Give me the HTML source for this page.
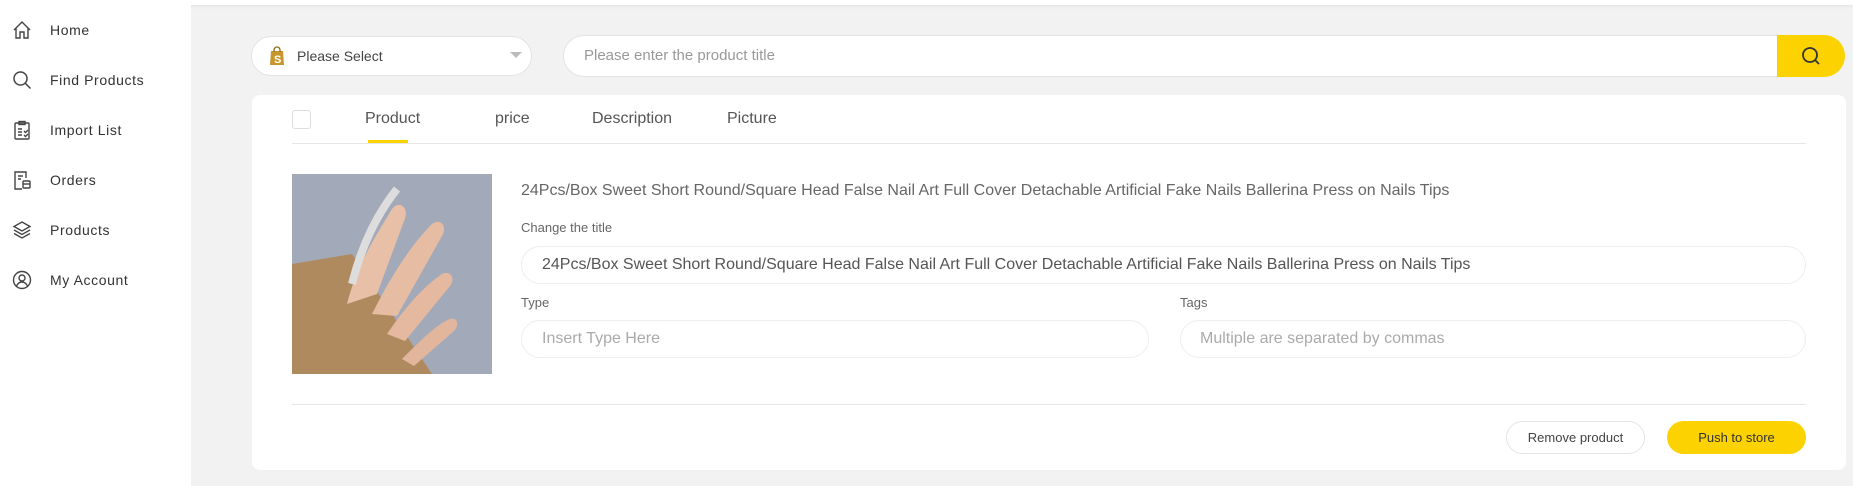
<!DOCTYPE html>
<html><head><meta charset="utf-8"><style>
*{box-sizing:border-box;margin:0;padding:0}
body{width:1853px;height:486px;background:#f2f2f2;font-family:"Liberation Sans",sans-serif;position:relative;overflow:hidden;color:#555}
.top{position:absolute;left:0;top:0;width:1853px;height:5px;background:#fff;box-shadow:0 1px 4px rgba(0,0,0,.08)}
.side{position:absolute;left:0;top:5px;width:191px;height:481px;background:#fff}
.nav{position:absolute;left:0;height:24px;display:flex;align-items:center;font-size:14px;color:#333;letter-spacing:.6px}
.nav svg{position:absolute;left:12px;width:20px;height:20px}
.nav span{position:absolute;left:50px;white-space:nowrap}
.abs{position:absolute}
.pill{position:absolute;background:#fff;border:1px solid #e4e4e4;border-radius:22px}
.t{position:absolute;white-space:nowrap}
</style></head><body>
<div class="top"></div>
<div class="side">
<div class="nav" style="top:13px"><svg viewBox="0 0 20 20" fill="none" stroke="#444" stroke-width="1.4"><path d="M2 10L10 2l8 8M4 8v10h4v-6h4v6h4V8"/></svg><span>Home</span></div>
<div class="nav" style="top:63px"><svg viewBox="0 0 20 20" fill="none" stroke="#444" stroke-width="1.5"><circle cx="8.5" cy="8.5" r="6.5"/><path d="M13.5 13.5l5 5"/></svg><span>Find Products</span></div>
<div class="nav" style="top:113px"><svg viewBox="0 0 20 20" fill="none" stroke="#444" stroke-width="1.4"><rect x="3" y="3" width="14" height="16" rx="1"/><rect x="7" y="1.5" width="6" height="3"/><path d="M6 9h4M6 12h4M6 15h4M12 11l1.5 1.5L16 10M12 15l1.5 1.5L16 14"/></svg><span>Import List</span></div>
<div class="nav" style="top:163px"><svg viewBox="0 0 20 20" fill="none" stroke="#444" stroke-width="1.4"><path d="M14 8V2H3v17h7"/><path d="M6 6h5M6 9h3"/><rect x="11" y="11" width="7" height="7" rx="1"/><path d="M11 14h7"/></svg><span>Orders</span></div>
<div class="nav" style="top:213px"><svg viewBox="0 0 20 20" fill="none" stroke="#444" stroke-width="1.4"><path d="M10 2l8 4.5-8 4.5-8-4.5z"/><path d="M2 10l8 4.5 8-4.5M2 13.5l8 4.5 8-4.5"/></svg><span>Products</span></div>
<div class="nav" style="top:263px"><svg viewBox="0 0 20 20" fill="none" stroke="#444" stroke-width="1.4"><circle cx="10" cy="10" r="8.5"/><circle cx="10" cy="8" r="3"/><path d="M4.5 16c1.5-3 3.5-4 5.5-4s4 1 5.5 4"/></svg><span>My Account</span></div>
</div>

<div class="pill" style="left:251px;top:36px;width:281px;height:40px"></div>
<svg class="abs" style="left:269px;top:46px" width="16" height="20" viewBox="0 0 16 20"><path d="M2 5h12l1 14H1z" fill="#c8962a"/><path d="M5 6V4a3 3 0 016 0v2" fill="none" stroke="#8a6a1a" stroke-width="1.3"/><text x="5" y="17" font-size="11" font-weight="bold" fill="#fff" font-family="Liberation Sans">S</text></svg>
<div class="t" style="left:297px;top:48px;font-size:14px;color:#444">Please Select</div>
<div class="abs" style="left:510px;top:52px;width:0;height:0;border-left:6px solid transparent;border-right:6px solid transparent;border-top:6px solid #bbb"></div>

<div class="pill" style="left:563px;top:35px;width:1240px;height:42px;border-radius:22px 0 0 22px"></div>
<div class="t" style="left:584px;top:47px;font-size:15px;color:#999">Please enter the product title</div>
<div class="abs" style="left:1777px;top:35px;width:68px;height:42px;background:#fcd200;border-radius:0 22px 22px 0"></div>
<svg class="abs" style="left:1800px;top:45px" width="22" height="22" viewBox="0 0 22 22" fill="none" stroke="#333" stroke-width="1.8"><circle cx="10" cy="10" r="7"/><path d="M15 15l4 4"/></svg>

<div class="abs" style="left:252px;top:95px;width:1594px;height:375px;background:#fff;border-radius:8px"></div>
<div class="abs" style="left:292px;top:110px;width:19px;height:19px;border:1px solid #ddd;border-radius:3px"></div>
<div class="t" style="left:365px;top:110px;font-size:16px;color:#555">Product</div>
<div class="t" style="left:495px;top:110px;font-size:16px;color:#555">price</div>
<div class="t" style="left:592px;top:110px;font-size:16px;color:#555">Description</div>
<div class="t" style="left:727px;top:110px;font-size:16px;color:#555">Picture</div>
<div class="abs" style="left:368px;top:140px;width:40px;height:3px;background:#fcd200"></div>
<div class="abs" style="left:292px;top:143px;width:1514px;height:1px;background:#e6e6e6"></div>

<svg class="abs" style="left:292px;top:174px" width="200" height="200" viewBox="0 0 200 200">
<rect width="200" height="200" fill="#9aa3b3"/>
<path d="M0 0h200v200H0z" fill="#a9b0bd" opacity=".5"/>
<path d="M0 90l60-10 80 120H0z" fill="#b08a5f"/>
<path d="M55 130c10-40 30-70 45-95 8-10 18 0 12 12L85 120z" fill="#e8c0a8"/>
<path d="M80 140c20-40 40-70 60-90 8-6 16 2 10 12l-45 80z" fill="#e6bca3"/>
<path d="M95 160c20-30 40-50 55-60 8-4 14 4 8 12l-45 55z" fill="#e4b9a0"/>
<path d="M110 185c20-20 35-35 48-40 7-2 10 6 4 12l-40 35z" fill="#e2b69d"/>
<path d="M60 110c10-40 25-70 45-95" stroke="#ddd" stroke-width="8" fill="none"/>
</svg>

<div class="t" style="left:521px;top:182px;font-size:16px;color:#666">24Pcs/Box Sweet Short Round/Square Head False Nail Art Full Cover Detachable Artificial Fake Nails Ballerina Press on Nails Tips</div>
<div class="t" style="left:521px;top:220px;font-size:13px;color:#666">Change the title</div>
<div class="pill" style="left:521px;top:246px;width:1285px;height:38px;border-color:#eee"></div>
<div class="t" style="left:542px;top:256px;font-size:16px;color:#555">24Pcs/Box Sweet Short Round/Square Head False Nail Art Full Cover Detachable Artificial Fake Nails Ballerina Press on Nails Tips</div>
<div class="t" style="left:521px;top:295px;font-size:13px;color:#666">Type</div>
<div class="t" style="left:1180px;top:295px;font-size:13px;color:#666">Tags</div>
<div class="pill" style="left:521px;top:320px;width:628px;height:38px;border-color:#eee"></div>
<div class="t" style="left:542px;top:330px;font-size:16px;color:#aaa">Insert Type Here</div>
<div class="pill" style="left:1180px;top:320px;width:626px;height:38px;border-color:#eee"></div>
<div class="t" style="left:1200px;top:330px;font-size:16px;color:#aaa">Multiple are separated by commas</div>
<div class="abs" style="left:292px;top:404px;width:1514px;height:1px;background:#e6e6e6"></div>
<div class="pill" style="left:1506px;top:421px;width:139px;height:33px;border-color:#e4e4e4;font-size:13px;color:#444;text-align:center;line-height:31px">Remove product</div>
<div class="abs" style="left:1667px;top:421px;width:139px;height:33px;background:#fcd200;border-radius:17px;font-size:13px;color:#333;text-align:center;line-height:33px">Push to store</div>
</body></html>
